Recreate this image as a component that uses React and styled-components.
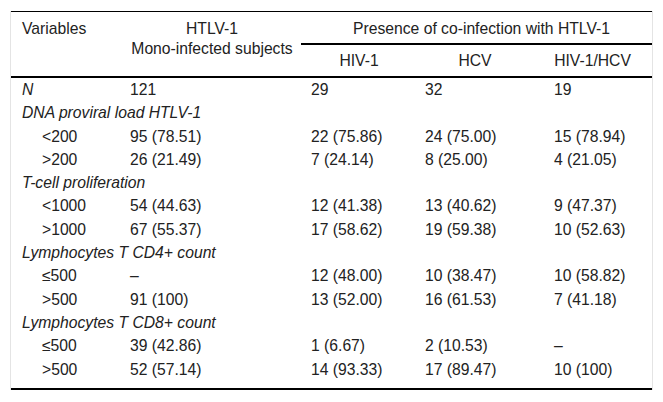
import React from "react";
import styled, { createGlobalStyle } from "styled-components";

const GlobalStyle = createGlobalStyle`
  body {
    margin: 0;
    background: #ffffff;
    font-family: "Liberation Sans", Arial, "DejaVu Sans", sans-serif;
    color: #222222;
  }
`;

const Page = styled.div`
  padding: 11px 0 0 10px;
`;

const Frame = styled.div`
  width: 643px;
  box-sizing: border-box;
  border-left: 1px solid #e4e4e4;
  border-right: 1px solid #e4e4e4;
`;

const Table = styled.table`
  width: 100%;
  table-layout: fixed;
  border-collapse: separate;
  border-spacing: 0;
  border-top: 1px solid #000;
  border-bottom: 2px solid #000;
  font-size: 15.7px;
`;

const HeadCell = styled.th`
  font-weight: normal;
  text-align: ${(p) => (p.$left ? "left" : "center")};
  vertical-align: top;
  line-height: 20px;
  padding: ${(p) => p.$pt || 7}px ${(p) => p.$pr || 0}px ${(p) => p.$pb || 0}px
    ${(p) => p.$pl || 10}px;
  border-bottom: ${(p) => (p.$rule ? "2px solid #000" : "none")};
  white-space: nowrap;
`;

const Cell = styled.td`
  line-height: 23.3px;
  padding: 0 0 ${(p) => (p.$last ? 7 : 0)}px ${(p) => p.$pl || 10}px;
  font-style: ${(p) => (p.$italic ? "italic" : "normal")};
  white-space: nowrap;
  vertical-align: top;
`;

const groups = [
  {
    title: "DNA proviral load HTLV-1",
    rows: [
      ["<200", "95 (78.51)", "22 (75.86)", "24 (75.00)", "15 (78.94)"],
      [">200", "26 (21.49)", "7 (24.14)", "8 (25.00)", "4 (21.05)"],
    ],
  },
  {
    title: "T-cell proliferation",
    rows: [
      ["<1000", "54 (44.63)", "12 (41.38)", "13 (40.62)", "9 (47.37)"],
      [">1000", "67 (55.37)", "17 (58.62)", "19 (59.38)", "10 (52.63)"],
    ],
  },
  {
    title: "Lymphocytes T CD4+ count",
    rows: [
      ["≤500", "–", "12 (48.00)", "10 (38.47)", "10 (58.82)"],
      [">500", "91 (100)", "13 (52.00)", "16 (61.53)", "7 (41.18)"],
    ],
  },
  {
    title: "Lymphocytes T CD8+ count",
    rows: [
      ["≤500", "39 (42.86)", "1 (6.67)", "2 (10.53)", "–"],
      [">500", "52 (57.14)", "14 (93.33)", "17 (89.47)", "10 (100)"],
    ],
  },
];

const App = () => {
  return (
    <Page>
      <GlobalStyle />
      <Frame>
        <Table>
          <colgroup>
            <col style={{ width: 109 }} />
            <col style={{ width: 181 }} />
            <col style={{ width: 114 }} />
            <col style={{ width: 129 }} />
            <col style={{ width: 108 }} />
          </colgroup>
          <thead>
            <tr>
              <HeadCell rowSpan={2} $left $pl={11} $rule>
                Variables
              </HeadCell>
              <HeadCell rowSpan={2} $pr={7} $rule>
                HTLV-1
                <br />
                Mono-infected subjects
              </HeadCell>
              <HeadCell colSpan={3} $pb={4} $rule>
                Presence of co-infection with HTLV-1
              </HeadCell>
            </tr>
            <tr>
              <HeadCell $pt={6} $pb={5} $pr={8} $rule>
                HIV-1
              </HeadCell>
              <HeadCell $pt={6} $pb={5} $pr={19} $rule>
                HCV
              </HeadCell>
              <HeadCell $pt={6} $pb={5} $pr={21} $rule>
                HIV-1/HCV
              </HeadCell>
            </tr>
          </thead>
          <tbody>
            <tr>
              <Cell $pl={11} $italic>
                N
              </Cell>
              <Cell>121</Cell>
              <Cell>29</Cell>
              <Cell>32</Cell>
              <Cell>19</Cell>
            </tr>
            {groups.map((g, gi) => (
              <React.Fragment key={g.title}>
                <tr>
                  <Cell colSpan={5} $pl={11} $italic>
                    {g.title}
                  </Cell>
                </tr>
                {g.rows.map((r, ri) => {
                  const last = gi === groups.length - 1 && ri === g.rows.length - 1;
                  return (
                    <tr key={ri}>
                      {r.map((v, ci) => (
                        <Cell key={ci} $pl={ci === 0 ? 31 : 10} $last={last}>
                          {v}
                        </Cell>
                      ))}
                    </tr>
                  );
                })}
              </React.Fragment>
            ))}
          </tbody>
        </Table>
      </Frame>
    </Page>
  );
};

export default App;
